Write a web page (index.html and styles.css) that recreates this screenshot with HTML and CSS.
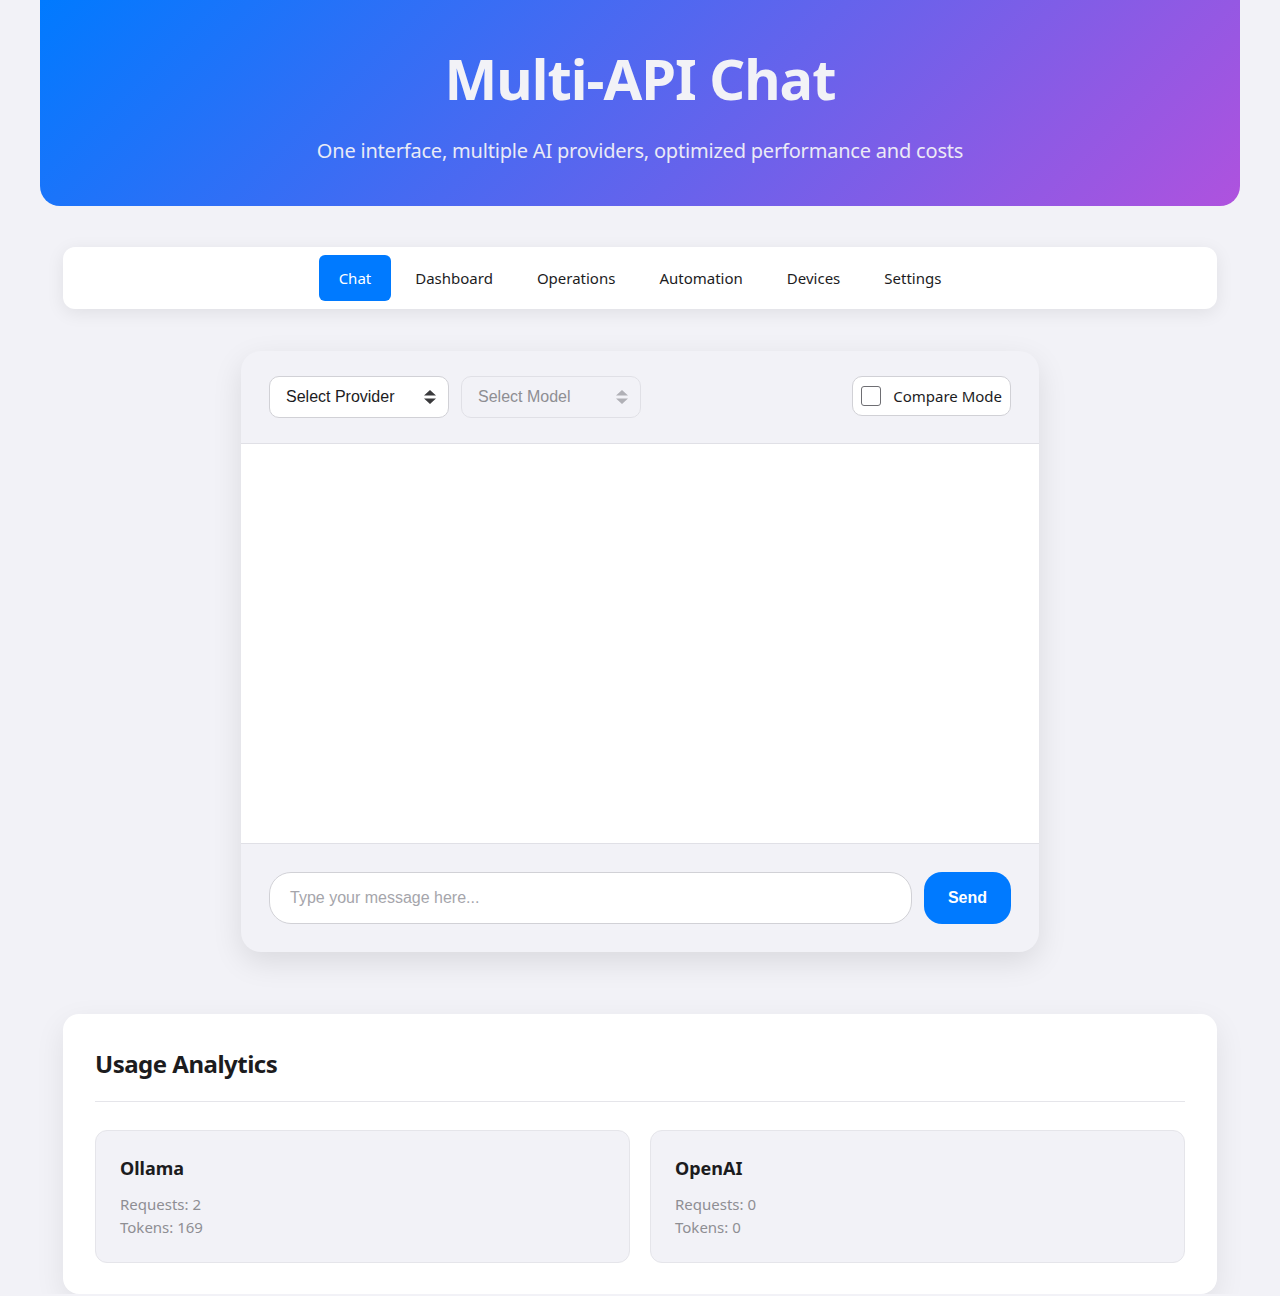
FILE: index.html
```html
<!DOCTYPE html>
<html lang="en">
<head>
<meta charset="utf-8">
<title>Multi-API Chat</title>
<link rel="stylesheet" href="styles.css">
</head>
<body>
<div class="app">
  <header class="hero">
    <h1 class="hero-title">Multi-API Chat</h1>
    <p class="hero-sub">One interface, multiple AI providers, optimized performance and costs</p>
  </header>

  <nav class="tabs">
    <button class="tab active">Chat</button>
    <button class="tab">Dashboard</button>
    <button class="tab">Operations</button>
    <button class="tab">Automation</button>
    <button class="tab">Devices</button>
    <button class="tab">Settings</button>
  </nav>

  <section class="chat">
    <div class="chat-head">
      <div class="select">
        <span>Select Provider</span>
        <svg class="arrows" width="12" height="14" viewBox="0 0 12 14"><path d="M6 0 L12 5.5 L0 5.5 Z M0 8.5 L12 8.5 L6 14 Z" fill="#3a3a3c"/></svg>
      </div>
      <div class="select disabled">
        <span>Select Model</span>
        <svg class="arrows" width="12" height="14" viewBox="0 0 12 14"><path d="M6 0 L12 5.5 L0 5.5 Z M0 8.5 L12 8.5 L6 14 Z" fill="#b0b0b6"/></svg>
      </div>
      <label class="compare">
        <span class="check"></span>
        <span>Compare Mode</span>
      </label>
    </div>
    <div class="messages"></div>
    <div class="chat-foot">
      <div class="msg-input">Type your message here...</div>
      <button class="send">Send</button>
    </div>
  </section>

  <section class="analytics">
    <h2 class="analytics-title">Usage Analytics</h2>
    <div class="stats">
      <div class="stat">
        <h3 class="stat-name">Ollama</h3>
        <p class="stat-line">Requests: 2</p>
        <p class="stat-line">Tokens: 169</p>
      </div>
      <div class="stat">
        <h3 class="stat-name">OpenAI</h3>
        <p class="stat-line">Requests: 0</p>
        <p class="stat-line">Tokens: 0</p>
      </div>
    </div>
  </section>
</div>
</body>
</html>
```

FILE: styles.css
```css
* { box-sizing: border-box; }

html, body {
  margin: 0;
  padding: 0;
  background: #f2f2f7;
  font-family: "Noto Sans", "Open Sans", sans-serif;
  color: #1c1c1e;
}

.app {
  width: 1200px;
  margin: 0 auto;
  display: flex;
  flex-direction: column;
  align-items: center;
}

.hero {
  width: 1200px;
  height: 206px;
  padding: 45px 20px 0;
  background: linear-gradient(135deg, #007aff 0%, #af52de 100%);
  border-radius: 0 0 20px 20px;
  text-align: center;
  color: #f2f2f7;
}

.hero-title {
  margin: 0;
  font-size: 56px;
  line-height: 67px;
  font-weight: 700;
  letter-spacing: -1px;
}

.hero-sub {
  margin: 24px 0 0;
  font-size: 20px;
  line-height: 30px;
  letter-spacing: -0.2px;
  opacity: 0.95;
}

.tabs {
  width: 1154px;
  margin-top: 41px;
  padding: 8px;
  background: #ffffff;
  border-radius: 12px;
  box-shadow: 0 4px 18px rgba(0, 0, 0, 0.08);
  display: flex;
  justify-content: center;
  gap: 4px;
}

.tab {
  border: none;
  background: transparent;
  font-family: "Noto Sans", sans-serif;
  font-size: 15px;
  line-height: 22px;
  padding: 12px 20px;
  border-radius: 6px;
  color: #1c1c1e;
}

.tab.active {
  background: #007aff;
  color: #ffffff;
}

.chat {
  width: 798px;
  margin-top: 42px;
  background: #f2f2f7;
  border-radius: 20px;
  box-shadow: 0 10px 30px rgba(0, 0, 0, 0.1);
  overflow: hidden;
}

.chat-head {
  height: 93px;
  padding: 25px 28px 0;
  display: flex;
  align-items: flex-start;
  gap: 12px;
  border-bottom: 1px solid #e0e0e6;
}

.select {
  width: 180px;
  height: 42px;
  padding: 0 12px 0 16px;
  background: #ffffff;
  border: 1px solid #d1d1d6;
  border-radius: 10px;
  display: flex;
  align-items: center;
  justify-content: space-between;
  font-family: "Liberation Sans", Arial, sans-serif;
  font-size: 16px;
  color: #1c1c1e;
}

.select.disabled {
  background: #f2f2f7;
  border-color: #e0e0e6;
  color: #8e8e93;
}

.compare {
  margin-left: auto;
  height: 40px;
  padding: 0 8px;
  background: #ffffff;
  border: 1px solid #d1d1d6;
  border-radius: 10px;
  display: flex;
  align-items: center;
  gap: 12px;
  font-size: 15px;
  color: #1c1c1e;
}

.check {
  width: 20px;
  height: 20px;
  border: 1px solid #6e6e73;
  border-radius: 3px;
  background: #ffffff;
}

.messages {
  height: 400px;
  background: #ffffff;
  border-bottom: 1px solid #e0e0e6;
}

.chat-foot {
  padding: 28px;
  display: flex;
  gap: 12px;
}

.msg-input {
  flex: 1;
  height: 52px;
  padding: 0 20px;
  background: #ffffff;
  border: 1px solid #d1d1d6;
  border-radius: 22px;
  display: flex;
  align-items: center;
  font-family: "Liberation Sans", Arial, sans-serif;
  font-size: 16px;
  color: #a5a5ab;
}

.send {
  width: 87px;
  height: 52px;
  border: none;
  border-radius: 18px;
  background: #007aff;
  color: #ffffff;
  font-family: "Liberation Sans", Arial, sans-serif;
  font-size: 16px;
  font-weight: 700;
}

.analytics {
  width: 1154px;
  margin-top: 62px;
  padding: 32px 32px 31px;
  background: #ffffff;
  border-radius: 16px;
  box-shadow: 0 10px 30px rgba(0, 0, 0, 0.08);
}

.analytics-title {
  margin: 0 0 28px;
  padding-bottom: 19px;
  border-bottom: 1px solid #e5e5ea;
  font-size: 24px;
  line-height: 36px;
  font-weight: 700;
  letter-spacing: -0.5px;
  color: #1c1c1e;
}

.stats {
  display: grid;
  grid-template-columns: 1fr 1fr;
  gap: 20px;
}

.stat {
  padding: 24px 24px 23px;
  background: #f2f2f7;
  border: 1px solid #e5e5ea;
  border-radius: 12px;
}

.stat-name {
  margin: 0 0 11px;
  font-size: 18px;
  line-height: 27px;
  font-weight: 700;
  color: #1c1c1e;
}

.stat-line {
  margin: 0;
  font-size: 15px;
  line-height: 23px;
  color: #8e8e93;
}
```
